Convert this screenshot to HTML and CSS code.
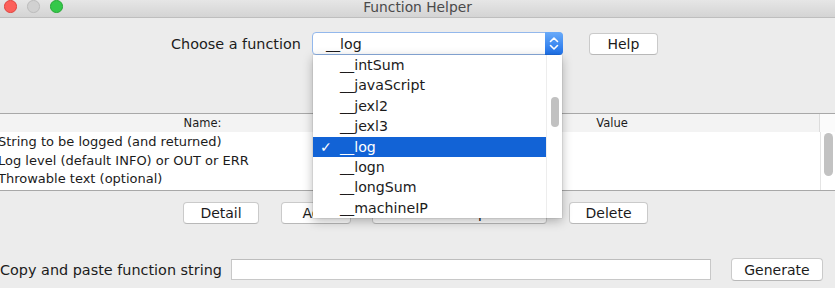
FILE: index.html
```html
<!DOCTYPE html>
<html>
<head>
<meta charset="utf-8">
<link rel="stylesheet" href="styles.css">
</head>
<body>
<div class="window">
  <div class="titlebar">
    <div class="lights">
      <span class="light red"></span>
      <span class="light gray"></span>
      <span class="light green"></span>
    </div>
    <div class="title">Function Helper</div>
    <div></div>
  </div>

  <div class="choose-row">
    <span class="label">Choose a function</span>
    <div class="combo">
      <span class="combo-text">__log</span>
      <span class="combo-arrow">
        <svg width="18" height="23" viewBox="0 0 18 23"><path d="M5.5 9.5 L9 6 L12.5 9.5 M5.5 13.5 L9 17 L12.5 13.5" fill="none" stroke="#fff" stroke-width="1.6" stroke-linecap="round" stroke-linejoin="round"/></svg>
      </span>
    </div>
    <button class="btn help">Help</button>
  </div>

  <div class="table">
    <div class="thead">
      <div class="th th-name">Name:</div>
      <div class="th th-value">Value</div>
      <div class="th-corner"></div>
    </div>
    <div class="tbody">
      <div class="rows">
        <div class="row">String to be logged (and returned)</div>
        <div class="row">Log level (default INFO) or OUT or ERR</div>
        <div class="row">Throwable text (optional)</div>
      </div>
      <div class="vscroll"><div class="vthumb"></div></div>
    </div>
  </div>

  <div class="btn-row">
    <button class="btn b-detail">Detail</button>
    <button class="btn b-add">Add</button>
    <button class="btn b-clip">Add from Clipboard</button>
    <button class="btn b-delete">Delete</button>
  </div>

  <div class="bottom-row">
    <span class="label">Copy and paste function string</span>
    <div class="field"></div>
    <button class="btn b-generate">Generate</button>
  </div>

  <div class="popup">
    <div class="list">
      <div class="item"><span class="check"></span>__intSum</div>
      <div class="item"><span class="check"></span>__javaScript</div>
      <div class="item"><span class="check"></span>__jexl2</div>
      <div class="item"><span class="check"></span>__jexl3</div>
      <div class="item selected"><span class="check">✓</span>__log</div>
      <div class="item"><span class="check"></span>__logn</div>
      <div class="item"><span class="check"></span>__longSum</div>
      <div class="item"><span class="check"></span>__machineIP</div>
    </div>
    <div class="pscroll"><div class="pthumb"></div></div>
  </div>
</div>
</body>
</html>
```

FILE: styles.css
```css
* { box-sizing: border-box; }
html, body { margin: 0; padding: 0; }
body { background: #ececec; }

.window {
  width: 835px;
  height: 288px;
  position: relative;
  overflow: hidden;
  background: #ececec;
  font-family: "DejaVu Sans", sans-serif;
  color: #1b1b1b;
}

/* title bar */
.titlebar {
  height: 18px;
  display: grid;
  grid-template-columns: 1fr auto 1fr;
  align-items: start;
  background: linear-gradient(#e6e6e6, #d4d4d4);
  border-bottom: 1px solid #bebebe;
}
.lights {
  display: flex;
  gap: 10.5px;
  padding-left: 4px;
  padding-top: 0;
}
.light {
  width: 12.5px;
  height: 12.5px;
  border-radius: 50%;
}
.red { background: #fc605b; border: 1px solid #e0443e; }
.gray { background: #d1d1d1; border: 1px solid #bcbcbc; }
.green { background: #35c84a; border: 1px solid #26a936; }
.title {
  font-size: 13.8px;
  line-height: 14px;
  color: #4a4a4a;
}

/* choose row */
.choose-row {
  margin-top: 14px;
  height: 23px;
  display: flex;
  align-items: center;
  padding-left: 171px;
}
.label {
  font-size: 14.4px;
  white-space: nowrap;
}
.choose-row .label { margin-right: 11px; }
.combo {
  width: 251px;
  height: 23px;
  display: flex;
  align-items: center;
  background: #fff;
  border: 1px solid #93b8ec;
  border-radius: 4px;
  margin-right: 26px;
}
.combo-text {
  padding-left: 13px;
  font-size: 14.2px;
  flex: 1;
}
.combo-arrow {
  width: 18px;
  height: 23px;
  margin: -1px -1px -1px 0;
  border-radius: 0 4px 4px 0;
  background: linear-gradient(#6aabf9, #1c70ea);
  display: flex;
}

.btn {
  height: 22px;
  padding: 0;
  background: #fff;
  border: 1px solid #cacaca;
  border-bottom-color: #b8b8b8;
  border-radius: 4px;
  font-family: "DejaVu Sans", sans-serif;
  font-size: 14px;
  color: #1b1b1b;
  white-space: nowrap;
  overflow: hidden;
}
.help { width: 69px; }

/* table */
.table {
  margin-top: 58px;
  border-top: 1px solid #a8a8a8;
  border-bottom: 1px solid #a8a8a8;
}
.thead {
  height: 18px;
  display: flex;
}
.th {
  background: #f3f3f3;
  font-size: 11.5px;
  line-height: 18px;
  text-align: center;
}
.th-name { width: 405px; }
.th-value { flex: 1; border-right: 1px solid #dcdcdc; }
.th-corner { width: 15px; background: #fbfbfb; }
.tbody {
  height: 58px;
  display: flex;
}
.rows {
  flex: 1;
  background: #fff;
  padding-top: 1px;
}
.row {
  height: 18.5px;
  line-height: 18.5px;
  font-size: 13px;
  margin-left: -2px;
  white-space: nowrap;
}
.vscroll {
  width: 15px;
  background: #fff;
  border-left: 1px solid #e4e4e4;
  padding-top: 1px;
}
.vthumb {
  width: 9px;
  height: 43px;
  margin-left: 3px;
  border-radius: 5px;
  background: #c2c2c2;
}

/* buttons */
.btn-row {
  margin-top: 11px;
  display: flex;
  padding-left: 183px;
}
.b-detail { width: 76px; margin-right: 22px; }
.b-add { width: 70px; margin-right: 21px; }
.b-clip { width: 175px; margin-right: 22px; }
.b-delete { width: 79px; }

/* bottom row */
.bottom-row {
  margin-top: 34px;
  height: 23px;
  display: flex;
  align-items: center;
}
.bottom-row .label { margin-right: 9px; }
.field {
  width: 480px;
  height: 21px;
  background: #fff;
  border: 1px solid #c8c8c8;
  border-top-color: #bdbdbd;
  margin-right: 20px;
}
.b-generate { width: 92px; height: 23px; }

/* popup */
.popup {
  position: absolute;
  left: 313px;
  top: 55px;
  width: 249px;
  height: 163px;
  background: #fff;
  display: flex;
  box-shadow: 0 3px 10px rgba(0,0,0,0.28), 0 0 0 0.5px rgba(0,0,0,0.12);
}
.list { flex: 1; }
.item {
  height: 20.375px;
  line-height: 20.375px;
  font-size: 14.2px;
  display: flex;
  white-space: nowrap;
}
.check {
  width: 27px;
  padding-left: 7px;
  flex: none;
}
.item.selected {
  background: #1263d6;
  color: #fff;
}
.pscroll {
  width: 16px;
  border-left: 1px solid #ededed;
  background: #fff;
}
.pthumb {
  width: 8px;
  height: 30px;
  margin-top: 42px;
  margin-left: 4px;
  border-radius: 4px;
  background: #c1c1c1;
}
```
